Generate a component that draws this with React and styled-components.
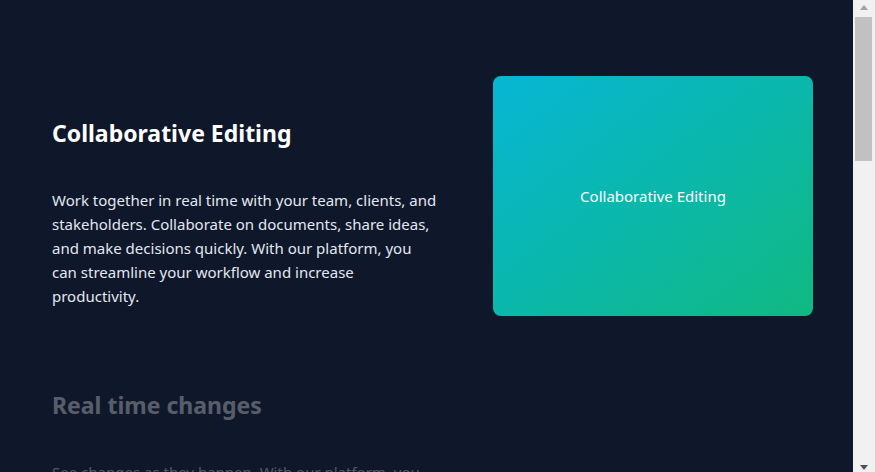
import React, { useState } from 'react';
import styled, { createGlobalStyle } from 'styled-components';

const GlobalStyle = createGlobalStyle`
  html, body {
    margin: 0;
    padding: 0;
    background: #0f172a;
  }
  body {
    font-family: "Noto Sans", "Open Sans", sans-serif;
    color: #e2e8f0;
  }
`;

const Page = styled.main`
  min-height: 100vh;
  background: #0f172a;
  padding: 76px 22px 268px 52px;
`;

const Layout = styled.div`
  display: grid;
  grid-template-columns: 386px 320px;
  column-gap: 55px;
  align-items: start;
`;

const FeatureList = styled.div`
  display: flex;
  flex-direction: column;
`;

const Feature = styled.section`
  padding: 41px 0 40px;
  opacity: ${(p) => (p.$active ? 1 : 0.3)};
  transition: opacity 0.3s ease;
`;

const Title = styled.h2`
  margin: 0 0 39px;
  font-size: 23px;
  line-height: 32px;
  font-weight: 700;
  color: #ffffff;
`;

const Body = styled.p`
  margin: 0;
  font-size: 15px;
  line-height: 24px;
  color: #e2e8f0;
`;

const Preview = styled.div`
  position: sticky;
  top: 76px;
  height: 240px;
  border-radius: 8px;
  background: linear-gradient(to bottom right, #06b6d4, #10b981);
  display: flex;
  align-items: center;
  justify-content: center;
  font-size: 15px;
  color: #ffffff;
`;

/* window scrollbar, drawn over the right edge */
const ScrollBar = styled.div`
  position: fixed;
  top: 0;
  right: 0;
  width: 22px;
  height: 100vh;
  background: #f1f1f1;
  display: flex;
  flex-direction: column;
`;

const Arrow = styled.div`
  height: 17px;
  flex: none;
  display: flex;
  align-items: center;
  justify-content: center;
  padding-right: 1px;
  &::before {
    content: '';
    border-left: 4px solid transparent;
    border-right: 4px solid transparent;
    ${(p) =>
      p.$down
        ? 'border-top: 5px solid #505050; margin-top: 7px;'
        : 'border-bottom: 5px solid #a3a3a3; margin-top: -3px;'}
  }
`;

const Track = styled.div`
  flex: 1;
`;

const Thumb = styled.div`
  height: 144px;
  margin: 0 3px 0 2px;
  background: #c1c1c1;
`;

const features = [
  {
    title: 'Collaborative Editing',
    text: 'Work together in real time with your team, clients, and stakeholders. Collaborate on documents, share ideas, and make decisions quickly. With our platform, you can streamline your workflow and increase productivity.',
  },
  {
    title: 'Real time changes',
    text: 'See changes as they happen. With our platform, you can track every edit, leave feedback, and stay on top of your projects without refreshing the page.',
  },
  {
    title: 'Version control',
    text: "Don't worry about losing work. Every change is saved automatically, so you can review the history and restore earlier versions whenever you need to.",
  },
  {
    title: 'Running out of content',
    text: 'Keep your team aligned with shared workspaces, comments and notifications. Everything you need to move fast lives in one place.',
  },
];

export default function App() {
  const [active] = useState(0);
  return (
    <>
      <GlobalStyle />
      <Page>
        <Layout>
          <FeatureList>
            {features.map((f, i) => (
              <Feature key={f.title} $active={i === active}>
                <Title>{f.title}</Title>
                <Body>{f.text}</Body>
              </Feature>
            ))}
          </FeatureList>
          <Preview>{features[active].title}</Preview>
        </Layout>
      </Page>
      <ScrollBar aria-hidden="true">
        <Arrow />
        <Track>
          <Thumb />
        </Track>
        <Arrow $down />
      </ScrollBar>
    </>
  );
}
